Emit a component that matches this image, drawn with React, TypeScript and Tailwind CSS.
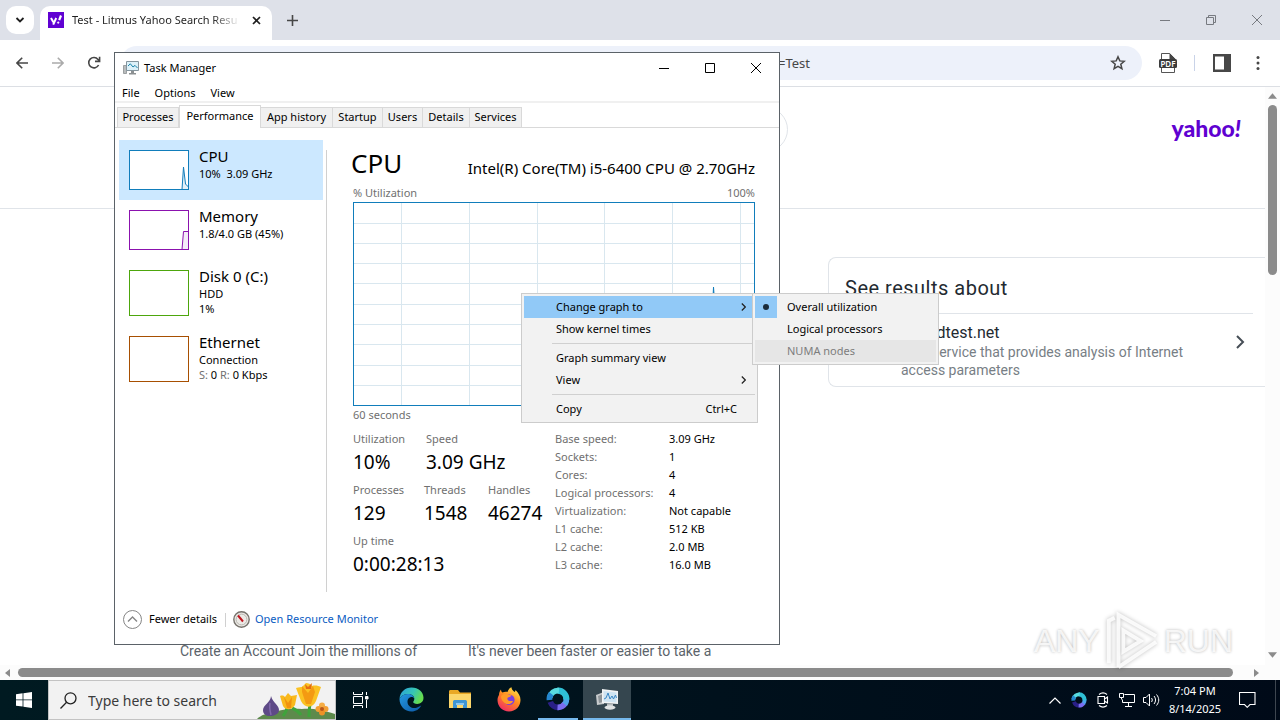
import type { ReactNode } from "react";

const tabs = ["Processes", "Performance", "App history", "Startup", "Users", "Details", "Services"];

const tabWidths: Record<string, string> = {
  Processes: "w-[62px]",
  Performance: "w-[82px]",
  "App history": "w-[72px]",
  Startup: "w-[50px]",
  Users: "w-10",
  Details: "w-[47px]",
  Services: "w-[52px]",
};

const specs = [
  ["Base speed:", "3.09 GHz"],
  ["Sockets:", "1"],
  ["Cores:", "4"],
  ["Logical processors:", "4"],
  ["Virtualization:", "Not capable"],
  ["L1 cache:", "512 KB"],
  ["L2 cache:", "2.0 MB"],
  ["L3 cache:", "16.0 MB"],
];

const gridX = [48, 116, 184, 251, 319, 387];
const gridY = [21, 41, 61, 81, 102, 122, 142, 163, 183];

function BrowserTabs() {
  return (
    <div className="flex h-10 shrink-0 items-end bg-[#dee1e9]">
      <button
        aria-label="Search tabs"
        className="mb-1.5 ml-1.5 flex h-7 w-7 items-center justify-center self-end rounded-[10px] bg-white"
      >
        <svg width="10" height="10" viewBox="0 0 10 10" fill="none" stroke="#1f1f1f" strokeWidth="1.8">
          <path d="M1.500 3 5 6.500 8.500 3" />
        </svg>
      </button>
      <div className="ml-1.5 flex h-[34px] w-[232px] items-center rounded-t-[10px] bg-white pb-1.5 pl-2 pr-[11px]">
        <div className="flex h-4 w-4 shrink-0 items-center justify-center bg-[#6001d2]">
          <svg width="13" height="12" viewBox="0 0 13 12" fill="none" stroke="#fff">
            <path d="M1 4l2.4 4.2M6.2 4 3.2 10.6" strokeWidth="2" />
            <path d="M11 1.5 9.2 6.2" strokeWidth="2.2" />
            <circle cx="8.2" cy="8.6" r=".8" fill="#fff" strokeWidth=".6" />
          </svg>
        </div>
        <div className="ml-2 whitespace-nowrap bg-linear-to-r from-[#1f1f1f] from-85% to-[#1f1f1f]/10 bg-clip-text text-[11px] leading-5 text-transparent">
          Test - Litmus Yahoo Search Resu
        </div>
        <button aria-label="Close tab" className="ml-auto flex h-2.5 w-2.5 items-center justify-center">
          <svg width="9" height="9" viewBox="0 0 9 9" stroke="#1f1f1f" strokeWidth="1.7">
            <path d="M1 1l7 7M8 1 1 8" />
          </svg>
        </button>
      </div>
      <button aria-label="New tab" className="ml-3 flex h-10 w-4 items-center justify-center">
        <svg width="11" height="11" viewBox="0 0 11 11" stroke="#474747" strokeWidth="1.6">
          <path d="M5.5 0v11M0 5.5h11" />
        </svg>
      </button>
      <div className="flex-1" />
      <button aria-label="Minimize" className="flex h-10 w-[46px] items-center justify-center">
        <svg width="10" height="10" viewBox="0 0 10 10" stroke="#777a80">
          <path d="M0 5.5h10" />
        </svg>
      </button>
      <button aria-label="Restore" className="flex h-10 w-[46px] items-center justify-center">
        <svg width="10" height="10" viewBox="0 0 10 10" fill="none" stroke="#777a80">
          <path d="M.5 2.5h7v7h-7zM2.5 2.5v-2h7v7h-2" />
        </svg>
      </button>
      <button aria-label="Close" className="flex h-10 w-[46px] items-center justify-center">
        <svg width="10" height="10" viewBox="0 0 10 10" stroke="#777a80">
          <path d="M0 0l10 10M10 0 0 10" />
        </svg>
      </button>
    </div>
  );
}

function Toolbar() {
  return (
    <div className="flex h-[47px] shrink-0 items-center rounded-tr-lg border-b border-[#dcdfe4] bg-white">
      <button aria-label="Back" className="ml-3 flex h-5 w-5 items-center justify-center">
        <svg width="12" height="12" viewBox="0 0 12 12" fill="none" stroke="#474747" strokeWidth="1.6">
          <path d="M12 6H1M6.2.8 1 6l5.2 5.2" />
        </svg>
      </button>
      <button aria-label="Forward" className="ml-4 flex h-5 w-5 items-center justify-center">
        <svg width="12" height="12" viewBox="0 0 12 12" fill="none" stroke="#ababab" strokeWidth="1.6">
          <path d="M0 6h11M5.8.8 11 6l-5.2 5.2" />
        </svg>
      </button>
      <button aria-label="Reload" className="ml-4 flex h-5 w-5 items-center justify-center">
        <svg width="14" height="14" viewBox="0 0 14 14" fill="none" stroke="#474747" strokeWidth="1.6">
          <path d="M11.6 9A5.2 5.2 0 1 1 11 3.4l1.4 1.5" />
          <path d="M12.6.8v4.6H8" />
        </svg>
      </button>
      <div className="ml-4 flex h-[34px] flex-1 items-center rounded-full bg-[#edf1fa] pr-3">
        <input
          aria-label="Address"
          defaultValue="=Test"
          className="h-6 min-w-0 flex-1 bg-transparent pl-[658px] text-[13px] text-[#474747] outline-none"
        />
        <button aria-label="Bookmark this page" className="flex h-6 w-6 items-center justify-center">
          <svg width="16" height="16" viewBox="0 0 16 16" fill="none" stroke="#474747" strokeWidth="1.5">
            <path d="M8 1.8l1.8 4.1 4.4.4-3.4 2.9 1.1 4.4L8 11.3l-3.9 2.3 1.1-4.4L1.8 6.3l4.4-.4z" />
          </svg>
        </button>
      </div>
      <button aria-label="PDF extension" className="ml-4 flex h-5 w-5 items-center justify-center">
        <svg width="18" height="20" viewBox="0 0 18 20">
          <path d="M2.5 6V.5h8l5 5V7M2.5 15v4.500h13V15" fill="none" stroke="#555" />
          <path d="M10.5 0v6h6z" fill="#444" />
          <rect y="6" width="18" height="9" rx="1.5" fill="#3c3c3c" />
          <text x="9" y="13.5" textAnchor="middle" fontSize="8" fontWeight="600" fill="#fff">
            PDF
          </text>
        </svg>
      </button>
      <div className="ml-4 h-4 w-px bg-[#c9d3e8]" />
      <button aria-label="Side panel" className="ml-[17px] flex h-5 w-5 items-center justify-center">
        <svg width="18" height="18" viewBox="0 0 18 18">
          <path d="M0 0h18v18H0z" fill="#474747" />
          <path d="M2 2.5h9v13H2z" fill="#fff" />
        </svg>
      </button>
      <button aria-label="Menu" className="ml-4 mr-3 flex h-5 w-5 items-center justify-center">
        <svg width="4" height="16" viewBox="0 0 4 16" fill="#474747">
          <circle cx="2" cy="2.6" r="1.5" />
          <circle cx="2" cy="8" r="1.5" />
          <circle cx="2" cy="13.4" r="1.5" />
        </svg>
      </button>
    </div>
  );
}

function WebPage() {
  return (
    <div className="flex min-h-0 flex-1 bg-white font-[Roboto,sans-serif]">
      <div className="flex min-w-0 flex-1 flex-col overflow-hidden">
        <header className="flex h-[122px] shrink-0 items-start justify-between border-b border-[#e0e4e9] pl-[180px] pr-6 pt-5">
          <div className="h-[45px] w-[608px] rounded-full border border-[#e0e4e9]" />
          <a
            href="#yahoo"
            aria-label="yahoo!"
            className="mt-[5px] font-['Lato',sans-serif] text-[23px] font-black leading-8 text-[#5f01d1]"
          >
            yahoo<span className="italic">!</span>
          </a>
        </header>
        <aside className="ml-[828px] mt-12 shrink-0 rounded-l-lg border border-r-0 border-[#e0e4e9] pb-[7px] pl-4 pr-3">
          <h2 className="pb-[11px] pt-4 text-[20px] leading-7 tracking-wide text-[#232a31]">See results about</h2>
          <a href="#speedtest" className="flex items-center border-t border-[#e0e4e9] pl-14 pt-[9px]">
            <div className="flex-1">
              <div className="text-[16px] leading-5 text-[#232a31]">Speedtest.net</div>
              <p className="w-[300px] text-[14px] leading-[18px] text-[#777e85]">
                Web service that provides analysis of Internet access parameters
              </p>
            </div>
            <svg width="10" height="14" viewBox="0 0 10 14" fill="none" stroke="#464e56" strokeWidth="2" className="mb-[18px] mr-2">
              <path d="M2 1l6 6-6 6" />
            </svg>
          </a>
        </aside>
        <div className="mt-auto flex shrink-0 pb-1 pl-[180px] text-[14px] leading-5 text-[#5b636a]">
          <p className="w-72">Create an Account Join the millions of</p>
          <p>It's never been faster or easier to take a</p>
        </div>
      </div>
      <div className="flex w-[15px] shrink-0 flex-col items-center bg-[#fcfcfc] pb-[7px] pt-1.5">
        <svg width="9" height="6" viewBox="0 0 8 5" fill="#8b8b8b">
          <path d="M0 5 4 0l4 5z" />
        </svg>
        <div className="mt-1.5 h-[170px] w-[9px] rounded-full bg-[#8b8b8b]" />
        <svg width="9" height="6" viewBox="0 0 8 5" fill="#8b8b8b" className="mt-auto">
          <path d="M0 0l4 5 4-5z" />
        </svg>
      </div>
    </div>
  );
}

function HorizontalScroll() {
  return (
    <div className="flex h-[15px] shrink-0 items-center bg-[#fcfcfc] pl-[5px] pr-[21px]">
      <svg width="5" height="8" viewBox="0 0 5 8" fill="#8b8b8b">
        <path d="M5 0 0 4l5 4z" />
      </svg>
      <div className="ml-2 mr-[21px] h-[9px] flex-1 rounded-full bg-[#8b8b8b]" />
      <svg width="5" height="8" viewBox="0 0 5 8" fill="#8b8b8b">
        <path d="M0 0l5 4-5 4z" />
      </svg>
    </div>
  );
}

function MonitorIcon() {
  return (
    <svg width="16" height="14" viewBox="0 0 16 14">
      <path d="M.5 4.5h3v8h-3z" fill="#b9bcbd" stroke="#8c9092" strokeWidth=".8" />
      <path d="M3.5.5h12v9h-12z" fill="#dcf1f9" stroke="#84959e" />
      <path d="M5 5l2.3-2.2L10 6l2-1.6L14.5 7" fill="none" stroke="#1b84ab" />
      <path d="M8 10h3v2H8zM6 12h7v1.5H6z" fill="#8c9092" />
    </svg>
  );
}

type SideItemProps = {
  name: string;
  height?: string;
  selected?: boolean;
  box: string;
  children: ReactNode;
  chart?: ReactNode;
};

function SideItem({ name, height = "h-[60px]", selected, box, children, chart }: SideItemProps) {
  return (
    <button
      className={`flex w-[204px] items-start px-[10px] text-left ${height} ${selected ? "bg-[#cce8ff]" : "bg-white"}`}
    >
      <div className={`mt-[10px] w-[60px] shrink-0 border bg-white ${box}`}>{chart}</div>
      <div className="ml-[10px] pt-[7px]">
        <div className="text-[15px] leading-[19px]">{name}</div>
        <div className="text-[11px] leading-[15px]">{children}</div>
      </div>
    </button>
  );
}

function Stat({ label, value, className }: { label: string; value: string; className: string }) {
  return (
    <div className={`shrink-0 whitespace-nowrap ${className}`}>
      <div className="text-[11px] leading-[18px] text-[#707070]">{label}</div>
      <div className="text-[19px] leading-7">{value}</div>
    </div>
  );
}

function CpuDetails() {
  return (
    <div className="min-w-0 flex-1 pl-6 pr-6 pt-5">
      <div className="flex h-8 items-end justify-between">
        <h1 className="text-[26px] leading-[34px]">CPU</h1>
        <div className="text-[15px] leading-6">Intel(R) Core(TM) i5-6400 CPU @ 2.70GHz</div>
      </div>
      <div className="mt-1 flex justify-between pl-0.5 text-[11px] leading-[18px] text-[#707070]">
        <span>% Utilization</span>
        <span>100%</span>
      </div>
      <div className="ml-0.5 h-[204px] border border-[#117dbb] bg-white">
        <svg className="h-full w-full" viewBox="0 0 400 202" preserveAspectRatio="none" fill="none">
          {gridX.map((x) => (
            <path key={x} d={`M${x - 0.5} 0v202`} stroke="#d9e7ef" />
          ))}
          {gridY.map((y) => (
            <path key={y} d={`M0 ${y - 0.5}h400`} stroke="#d9e7ef" />
          ))}
          <path d="M354 202 359.5 84 366 175l7 14 27 4v9z" fill="#117dbb" stroke="#117dbb" />
        </svg>
      </div>
      <div className="pl-0.5 text-[11px] leading-[18px] text-[#707070]">60 seconds</div>
      <div className="mt-[6px] flex pl-0.5">
        <div className="w-[202px] shrink-0">
          <div className="flex">
            <Stat label="Utilization" value="10%" className="w-[73px]" />
            <Stat label="Speed" value="3.09 GHz" className="w-20" />
          </div>
          <div className="mt-[5px] flex">
            <Stat label="Processes" value="129" className="w-[71px]" />
            <Stat label="Threads" value="1548" className="w-16" />
            <Stat label="Handles" value="46274" className="w-14" />
          </div>
          <div className="mt-[5px]">
            <Stat label="Up time" value="0:00:28:13" className="w-24" />
          </div>
        </div>
        <dl className="grid grid-cols-[114px_1fr] content-start text-[11px] leading-[18px]">
          {specs.map(([label, value]) => (
            <div key={label} className="contents">
              <dt className="text-[#707070]">{label}</dt>
              <dd>{value}</dd>
            </div>
          ))}
        </dl>
      </div>
    </div>
  );
}

function TaskManager() {
  return (
    <section className="absolute left-[114px] top-[52px] flex w-[666px] flex-col border border-[#5b6268] bg-white text-black">
      <div className="flex h-[30px] items-center pl-2">
        <MonitorIcon />
        <span className="ml-[5px] flex-1 text-[11px]">Task Manager</span>
        <button aria-label="Minimize" className="flex h-full w-[46px] items-center justify-center">
          <svg width="10" height="10" viewBox="0 0 10 10" stroke="#000">
            <path d="M0 5.5h10" />
          </svg>
        </button>
        <button aria-label="Maximize" className="flex h-full w-[46px] items-center justify-center">
          <svg width="10" height="10" viewBox="0 0 10 10" fill="none" stroke="#000">
            <path d="M.5.5h9v9h-9z" />
          </svg>
        </button>
        <button aria-label="Close" className="flex h-full w-[46px] items-center justify-center">
          <svg width="10" height="10" viewBox="0 0 10 10" stroke="#000">
            <path d="M0 0l10 10M10 0 0 10" />
          </svg>
        </button>
      </div>
      <nav className="flex h-5 items-end gap-[15px] border-b-2 border-[#f0f0f0] pl-[7px] text-[11px] leading-4">
        <button>File</button>
        <button>Options</button>
        <button>View</button>
      </nav>
      <div className="flex h-[25px] items-end border-b border-[#d9d9d9] pl-0.5 text-[11px]">
        {tabs.map((tab) =>
          tab === "Performance" ? (
            <button
              key={tab}
              className={`-mb-px h-[23px] border border-b-0 border-[#d9d9d9] bg-white pb-0.5 text-center ${tabWidths[tab]}`}
            >
              {tab}
            </button>
          ) : (
            <button
              key={tab}
              className={`h-5 whitespace-nowrap border border-b-0 border-l-0 border-[#d9d9d9] bg-[#f0f0f0] text-center first:border-l ${tabWidths[tab]}`}
            >
              {tab}
            </button>
          ),
        )}
      </div>
      <div className="flex h-[464px]">
        <div className="flex w-[207px] shrink-0 flex-col pl-1 pt-3">
          <SideItem
            name="CPU"
            selected
            box="h-10 border-[#117dbb]"
            chart={
              <svg width="58" height="38" viewBox="0 0 58 38" fill="#e3f1f9" stroke="#117dbb">
                <path d="M52 38.500 53.500 16l2 17 3 3v3z" />
              </svg>
            }
          >
            10%&nbsp; 3.09 GHz
          </SideItem>
          <SideItem
            name="Memory"
            box="h-10 border-[#8b12ae]"
            chart={
              <svg width="58" height="38" viewBox="0 0 58 38" fill="#f4ecf8" stroke="#8b12ae">
                <path d="M52 38.500 53.500 20.500h5v18z" />
              </svg>
            }
          >
            1.8/4.0 GB (45%)
          </SideItem>
          <SideItem name="Disk 0 (C:)" height="h-[66px]" box="h-[46px] border-[#4da60c]">
            HDD
            <br />
            1%
          </SideItem>
          <SideItem name="Ethernet" height="h-[66px]" box="h-[46px] border-[#a74f01]">
            Connection
            <br />
            <span className="text-[#707070]">S:</span> 0 <span className="text-[#707070]">R:</span> 0 Kbps
          </SideItem>
        </div>
        <div className="ml-1 mt-[22px] w-px bg-[#d0d0d0]" />
        <CpuDetails />
      </div>
      <footer className="flex h-[52px] items-center pl-2 pt-[3px] text-[11px]">
        <button className="flex items-center">
          <svg width="19" height="19" viewBox="0 0 19 19" fill="none" stroke="#858585">
            <circle cx="9.500" cy="9.500" r="9" />
            <path d="M5 11.500 9.500 7l4.500 4.500" strokeWidth="1.400" />
          </svg>
          <span className="ml-[7px]">Fewer details</span>
        </button>
        <div className="ml-2 h-3.5 w-px bg-[#d0d0d0]" />
        <a href="#resmon" className="ml-[7px] flex items-center text-[#0a5cc2]">
          <svg width="17" height="17" viewBox="0 0 17 17">
            <circle cx="8.500" cy="8.500" r="7.700" fill="#eceae6" stroke="#77736d" strokeWidth="1.400" />
            <circle cx="8.500" cy="8.500" r="5.400" fill="none" stroke="#b9b6b0" />
            <path d="M5 4.500l5 6" stroke="#c0151f" strokeWidth="2" />
          </svg>
          <span className="ml-[5px]">Open Resource Monitor</span>
        </a>
      </footer>
    </section>
  );
}

function MenuArrow() {
  return (
    <svg width="5" height="8" viewBox="0 0 5 8" fill="none" stroke="#222" strokeWidth="1.200">
      <path d="M.8.5 4.300 4 .8 7.500" />
    </svg>
  );
}

function GraphMenu() {
  const row = "flex h-[22px] w-full items-center pl-8 pr-[9px] text-left";
  return (
    <>
      <div className="absolute left-[521px] top-[293px] w-[237px] border border-[#ccc] bg-[#f2f2f2] p-0.5 text-[11px] text-black">
        <button className={`${row} bg-[#91c9f7]`}>
          <span className="flex-1">Change graph to</span>
          <MenuArrow />
        </button>
        <button className={row}>Show kernel times</button>
        <div className="my-[3px] ml-7 h-px bg-[#d0d0d0]" />
        <button className={row}>Graph summary view</button>
        <button className={row}>
          <span className="flex-1">View</span>
          <MenuArrow />
        </button>
        <div className="my-[3px] ml-7 h-px bg-[#d0d0d0]" />
        <button className={row}>
          <span className="flex-1">Copy</span>
          <span className="mr-[9px]">Ctrl+C</span>
        </button>
      </div>
      <div className="absolute left-[752px] top-[293px] w-[187px] border border-[#ccc] bg-[#f2f2f2] p-0.5 text-[11px] text-black">
        <button className="flex h-[22px] w-full items-center text-left">
          <span className="flex h-[22px] w-[22px] items-center justify-center bg-[#91c9f7]">
            <span className="h-1.5 w-1.5 rounded-full bg-[#1a2b3a]" />
          </span>
          <span className="ml-[10px]">Overall utilization</span>
        </button>
        <button className={row}>Logical processors</button>
        <button disabled className={`${row} bg-[#e6e6e6] text-[#7d7d7d]`}>
          NUMA nodes
        </button>
      </div>
    </>
  );
}

function Watermark() {
  return (
    <div className="pointer-events-none absolute bottom-[48px] right-[47px] flex items-center gap-1 font-['Liberation_Sans_Narrow','Liberation_Sans',sans-serif] text-[32px] leading-[60px] text-white/80 text-shadow-[0_0_3px_rgb(0_0_0/0.3)]">
      <span>ANY</span>
      <svg
        width="56"
        height="62"
        viewBox="0 0 58 62"
        fill="none"
        stroke="#fff"
        strokeOpacity=".85"
        strokeWidth="4"
        className="drop-shadow-[0_0_2px_rgb(0_0_0/0.3)]"
      >
        <path d="M5 54V10l6-3M15 58V4l39 22M15 4v14M54 32 15 58M20 20v22l18-11z" />
      </svg>
      <span>RUN</span>
    </div>
  );
}

function EdgeIcon() {
  return (
    <svg width="25" height="25" viewBox="0 0 25 25">
      <defs>
        <linearGradient id="edge-top" x1="0" y1="0" x2="1" y2="0.400">
          <stop offset="0" stopColor="#2a9fe0" />
          <stop offset="0.600" stopColor="#36c6b4" />
          <stop offset="1" stopColor="#65dc4f" />
        </linearGradient>
        <linearGradient id="edge-low" x1="0" y1="0" x2="1" y2="1">
          <stop offset="0" stopColor="#2599e2" />
          <stop offset="1" stopColor="#0b57a4" />
        </linearGradient>
      </defs>
      <path d="M.5 12C1 5 6 .5 12.500 .5c7 0 12 4.700 12 10.300 0 4-3 6.200-6.300 6.200-2.500 0-4-.9-4-1.900 0-.8 1.100-1.200 1.100-3.300C15.300 9 12.500 7 9 7 5.500 7 2 8.800.5 12z" fill="url(#edge-top)" />
      <path d="M.5 12C2 8.800 5.500 7 9 7c3.500 0 6 1.900 6.300 4.500-1-1.200-2.500-1.700-3.800-1.300-2.500.8-3.400 3-2.900 5.700.7 3.600 4.900 6.200 9.600 4.500l4-1.900C20.500 22.300 16.800 24.500 12.500 24.500 5.800 24.500.5 19 .5 12z" fill="url(#edge-low)" />
    </svg>
  );
}

function SwirlIcon({ size }: { size: number }) {
  return (
    <svg width={size} height={size} viewBox="0 0 25 25" fill="none">
      <path d="M4.500 15.500A8.600 8.600 0 0 0 13 21.200" stroke="#2a1f87" strokeWidth="6" />
      <path d="M12 21.200A8.800 8.800 0 0 0 20 17" stroke="#7a6cf0" strokeWidth="6" />
      <path d="M19.400 18A8.700 8.700 0 0 0 21 11" stroke="#4fa2ea" strokeWidth="6" />
      <path d="M21.200 13A8.700 8.700 0 0 0 12 3.800" stroke="#2fc0d6" strokeWidth="6.400" />
      <path d="M13.500 3.800A9 9 0 0 0 3.800 11" stroke="#58dbe0" strokeWidth="6" />
      <path d="M5.500 7A9 9 0 0 0 3.600 13.500" stroke="#2486cf" strokeWidth="6" />
    </svg>
  );
}

function FolderIcon() {
  return (
    <svg width="22" height="19" viewBox="0 0 22 19">
      <path d="M0 1.500C0 .7.500 0 1.500 0H9l2 2.500h11V18H0z" fill="#e9a825" />
      <path d="M0 4h22v14H0z" fill="#fbd66b" />
      <path d="M4 18v-6.500C4 10.500 5 10 6 10h10c1 0 2 .5 2 1.500V18h-4v-3H8v3z" fill="#3e95d4" />
      <path d="M7 13h8v2H7z" fill="#8cc7ee" />
    </svg>
  );
}

function FirefoxIcon() {
  return (
    <svg width="24" height="25" viewBox="0 0 24 25">
      <defs>
        <linearGradient id="fox" x1="0.800" y1="0" x2="0.200" y2="1">
          <stop offset="0" stopColor="#ffe64c" />
          <stop offset="0.450" stopColor="#ff8a1f" />
          <stop offset="1" stopColor="#f0256a" />
        </linearGradient>
      </defs>
      <path d="M2 8C2 5.500 3 3.500 4 2.500c0 1.500.7 2.500 1.500 3C7 4.700 9 4.400 10.500 5 11 3 12.500 1 14.500.3c0 2 1 3 3 4.700.8-.4 1-1.500 1-2C21.500 5.500 23.500 9.500 23.500 13 23.500 19.500 18.500 24.500 12 24.500S.5 19.500.5 13C.5 11 1.200 9.300 2 8z" fill="url(#fox)" />
      <circle cx="12.300" cy="12.800" r="5.300" fill="#7a3fe0" />
      <path d="M4 9c2-2.500 5-2.500 7-1.500 1.500.8 3 .7 3.500.7-.5 1.800-3 1.700-3.800 2.600-.8 1-.2 2.800 2 3.200 1.300.2 2.300-.3 3.300.2-1 2.800-5 3.700-8 2C5.500 14.700 4 12 4 9z" fill="#ff9a27" />
    </svg>
  );
}

function TaskmgrIcon() {
  return (
    <svg width="23" height="22" viewBox="0 0 23 22">
      <path d="M0 7l8-3v12l-7 1z" fill="#c8cbcd" />
      <path d="M2 8l5-2v8l-4 1z" fill="#8e9498" />
      <path d="M6 1l16 2v13l-16-1z" fill="#f1f3f4" />
      <path d="M7.500 3l13 1.500v10L7.500 13.500z" fill="#cfe4f2" />
      <path d="M8 11l2-1 2-5 2 6 2-3 1.500 3 2-4 1 3" fill="none" stroke="#3a87c5" />
      <path d="M11 15.500h6V18h-6z" fill="#b4b8ba" />
      <ellipse cx="14" cy="19.500" rx="5.500" ry="2.200" fill="#dfe2e3" />
    </svg>
  );
}

function Flowers() {
  return (
    <svg width="78" height="38" viewBox="0 0 78 38" className="shrink-0">
      <path d="M0 38c4-4 10-6 17-6 5-3 14-5 28-4 10-1 20 1 33 5v5z" fill="#5d8a4c" />
      <path d="M26 35c3-4 4-7 4-9M52 36c0-5 0-8 1-12M44 34c-2-3-4-5-9-7" fill="none" stroke="#3fa33c" strokeWidth="3" />
      <path d="M14 15c0 6-8 9-8 14 0 4 3 6 7 6s9-2 9-6c0-5-6-7-8-14z" fill="#5e4a87" />
      <path d="M13 22c-1 4 0 8 1 12" fill="none" stroke="#8069ab" strokeWidth="1.500" />
      <path d="M23 15c3-1 4 0 5 1l3-4 3 3 6-1-2 10c-3 5-9 6-12 1z" fill="#f9b91d" />
      <path d="M27 16l4 6 4-6-1 11h-4z" fill="#f0920f" />
      <path d="M39 7c3-1 5-1 6-1l4-4c2 0 5 1 6 3 3-1 7 0 9 1l-5 14c-3 7-11 8-15 0z" fill="#fbc223" />
      <path d="M45 5l6 7 5-7 2 6-4 12h-5l-4-12z" fill="#f49a12" />
      <path d="M48 3l3 3 4-4-1 6h-5z" fill="#e56c12" />
      <circle cx="65" cy="24.500" r="3" fill="#f5ad45" />
      <circle cx="61.500" cy="28" r="3" fill="#f3a035" />
      <circle cx="68.500" cy="28" r="3" fill="#f3a035" />
      <circle cx="65" cy="31.500" r="3" fill="#ee9227" />
      <circle cx="65" cy="28" r="2" fill="#b9551a" />
    </svg>
  );
}

function Taskbar() {
  const app = "flex h-full w-12 items-center justify-center border-b-2";
  return (
    <div className="flex h-10 shrink-0 items-center bg-linear-to-r from-[#001a21] to-[#000a18] text-white">
      <button aria-label="Start" className="flex h-full w-12 items-center justify-center">
        <svg width="16" height="16" viewBox="0 0 16 16" fill="#fff">
          <path d="M0 2.200 6.600 1.300v6.200H0zM7.400 1.200 16 0v7.500H7.400zM0 8.300h6.600v6.300L0 13.700zM7.400 8.300H16V16l-8.600-1.200z" />
        </svg>
      </button>
      <label className="flex h-full w-72 items-center border border-[#c3c3c3] bg-[#f2f2f2] pl-[11px]">
        <svg width="17" height="17" viewBox="0 0 17 17" fill="none" stroke="#222" strokeWidth="1.300" className="shrink-0">
          <circle cx="10.500" cy="6.300" r="5.500" />
          <path d="M6.600 10.300.5 16.500" />
        </svg>
        <input
          aria-label="Search"
          placeholder="Type here to search"
          className="ml-[11px] h-8 min-w-0 flex-1 bg-transparent text-[14px] placeholder:text-[#3b3b3b] outline-none"
        />
        <Flowers />
      </label>
      <button aria-label="Task view" className="flex h-full w-12 items-center justify-center">
        <svg width="17" height="16" viewBox="0 0 17 16" fill="none" stroke="#fff">
          <path d="M1.500 0v2.500h9V0M1.500 16v-2.500h9V16M1.500 4.500h9v7h-9zM14.500 0v3M14.500 8v8" />
          <path d="M13.500 4.500h2.500v2.500h-2.500z" fill="#fff" />
        </svg>
      </button>
      <div className="ml-[3px] flex h-full gap-px">
        <button aria-label="Microsoft Edge" className={`${app} border-transparent`}>
          <EdgeIcon />
        </button>
        <button aria-label="File Explorer" className={`${app} border-transparent`}>
          <FolderIcon />
        </button>
        <button aria-label="Firefox" className={`${app} border-transparent`}>
          <FirefoxIcon />
        </button>
        <button aria-label="Browser" className="flex h-full w-12 px-1">
          <span className="flex h-full w-full items-center justify-center border-b-2 border-[#76b9ed]">
            <SwirlIcon size={24} />
          </span>
        </button>
        <button aria-label="Task Manager" className={`${app} border-[#76b9ed] bg-[#35464f]`}>
          <TaskmgrIcon />
        </button>
      </div>
      <div className="ml-auto flex h-full items-center">
        <button aria-label="Show hidden icons" className="flex w-6 justify-center">
          <svg width="12" height="7" viewBox="0 0 12 7" fill="none" stroke="#fff" strokeWidth="1.200">
            <path d="M.5 6.500 6 1l5.500 5.500" />
          </svg>
        </button>
        <button aria-label="Browser tray" className="flex w-6 justify-center">
          <SwirlIcon size={16} />
        </button>
        <button aria-label="Meet now" className="flex w-6 justify-center">
          <svg width="12" height="16" viewBox="0 0 12 16" fill="none" stroke="#fff" strokeWidth="1.100">
            <path d="M1 4.500h6.500v7H1zM7.500 7l3-2v6l-3-2M2 2.500C4.500.5 7.500.5 10 2.500M2 13.500c2.500 2 5.500 2 8 0" />
          </svg>
        </button>
        <button aria-label="Network" className="flex w-6 justify-center">
          <svg width="16" height="15" viewBox="0 0 16 15" fill="none" stroke="#fff">
            <path d="M5.500 1.500h10v8h-12v-3M9.500 10v3.500M6 13.500h7M.5.500h4v4h-4zM2.500 4.500v2" />
          </svg>
        </button>
        <button aria-label="Volume" className="flex w-6 justify-center">
          <svg width="17" height="14" viewBox="0 0 17 14" fill="none" stroke="#fff">
            <path d="M.5 4.500H3L6.500 1v12L3 9.500H.5zM8.500 5c1 1.300 1 2.700 0 4M11 3c2 2.600 2 5.400 0 8M13.500 1.500c3 3.700 3 7.300 0 11" />
          </svg>
        </button>
        <div className="w-16 text-center text-[11px] leading-[18px]">
          7:04 PM
          <br />
          8/14/2025
        </div>
        <button aria-label="Notifications" className="ml-2 flex w-6 justify-center">
          <svg width="17" height="16" viewBox="0 0 17 16" fill="none" stroke="#fff" strokeWidth="1.100">
            <path d="M.5.500h15.500v12h-5L8.200 15.300 5.500 12.500h-5z" />
          </svg>
        </button>
        <div className="ml-4 mr-1 h-full w-px bg-[#3e4650]" />
      </div>
    </div>
  );
}

export default function App() {
  return (
    <div className="relative flex h-screen flex-col overflow-hidden bg-white font-['Noto_Sans','Open_Sans',sans-serif]">
      <BrowserTabs />
      <Toolbar />
      <WebPage />
      <HorizontalScroll />
      <Taskbar />
      <TaskManager />
      <GraphMenu />
      <Watermark />
    </div>
  );
}
